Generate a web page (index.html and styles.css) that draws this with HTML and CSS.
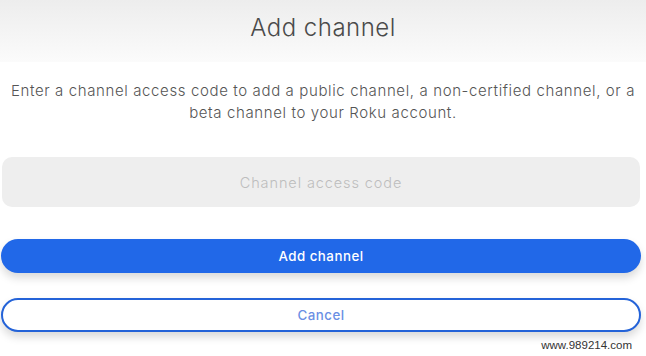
FILE: index.html
```html
<!DOCTYPE html>
<html>
<head>
<meta charset="utf-8">
<link rel="stylesheet" href="styles.css">
</head>
<body>
<div class="page">
  <header class="header"><h1 class="title">Add channel</h1></header>
  <p class="desc">Enter a channel access code to add a public channel, a non-certified channel, or a beta channel to your Roku account.</p>
  <div class="field"><span class="placeholder">Channel access code</span></div>
  <button class="btn primary">Add channel</button>
  <button class="btn secondary">Cancel</button>
  <span class="watermark">www.989214.com</span>
</div>
</body>
</html>
```
FILE: styles.css
```css
html, body { margin: 0; padding: 0; background: #fff; }
.page {
  position: relative;
  width: 646px;
  height: 356px;
  overflow: hidden;
  font-family: Inter, "Noto Sans", sans-serif;
}
.header {
  height: 62px;
  background: linear-gradient(#ededed, #fbfbfb);
  display: flex;
  align-items: center;
  justify-content: center;
}
.title {
  margin: 0 0 8px 0;
  font-weight: 300;
  font-size: 24px;
  letter-spacing: 0.5px;
  color: #4a4a4a;
}
.desc {
  margin: 18px 2px 0 2px;
  text-align: center;
  font-size: 15px;
  letter-spacing: 0.62px;
  line-height: 22px;
  color: #555;
  font-weight: 300;
}
.field {
  margin: 33px 6px 0 2px;
  height: 50px;
  background: #eeeeee;
  border-radius: 10px;
  display: flex;
  align-items: center;
  justify-content: center;
}
.placeholder { color: #bdbdbd; font-size: 14.5px; font-weight: 300; letter-spacing: 0.9px; }
.btn {
  display: block;
  box-sizing: border-box;
  width: 640px;
  height: 34px;
  margin-left: 1px;
  border-radius: 17px;
  font-family: inherit;
  font-size: 13.3px;
  font-weight: 500;
  letter-spacing: 0.5px;
  box-shadow: 0 5px 8px rgba(0,0,0,0.15);
}
.primary {
  margin-top: 32px;
  background: #2168e8;
  color: #fff;
  border: none;
}
.secondary {
  margin-top: 25px;
  background: #fff;
  color: #6a8fe4;
  border: 2.5px solid #2463d8;
}
.watermark {
  position: absolute;
  right: 14px;
  bottom: 5px;
  font-family: "Liberation Sans", Arial, sans-serif;
  font-size: 11.5px;
  color: #333;
}
```
